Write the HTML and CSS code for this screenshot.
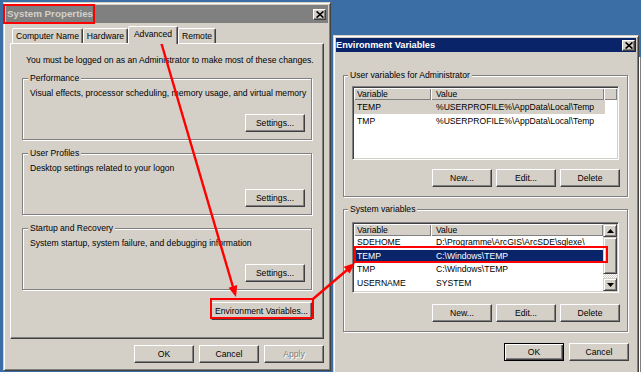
FILE: index.html
```html
<!DOCTYPE html>
<html>
<head>
<meta charset="utf-8">
<title>System Properties</title>
<link rel="stylesheet" href="styles.css">
</head>
<body>
<div class="desktop">
  <div class="win win-back"></div>

  <div class="win win-sys">
    <div class="titlebar titlebar-inactive">
      <span class="title-text">System Properties</span>
      <span class="close"><svg width="8" height="7" viewBox="0 0 8 7"><path d="M0.6 0.4 L7.4 6.6 M7.4 0.4 L0.6 6.6" stroke="#000" stroke-width="1.6"/></svg></span>
    </div>
    <div class="tabs">
      <div class="tab tab-cn">Computer Name</div>
      <div class="tab tab-hw">Hardware</div>
      <div class="tab tab-adv tab-active">Advanced</div>
      <div class="tab tab-rem">Remote</div>
    </div>
    <div class="panel">
      <p class="note">You must be logged on as an Administrator to make most of these changes.</p>
      <fieldset class="group sys-group group-perf">
        <legend>Performance</legend>
        <p class="desc">Visual effects, processor scheduling, memory usage, and virtual memory</p>
        <button class="btn btn-settings">Settings...</button>
      </fieldset>
      <fieldset class="group sys-group group-next">
        <legend>User Profiles</legend>
        <p class="desc">Desktop settings related to your logon</p>
        <button class="btn btn-settings">Settings...</button>
      </fieldset>
      <fieldset class="group sys-group group-next">
        <legend>Startup and Recovery</legend>
        <p class="desc">System startup, system failure, and debugging information</p>
        <button class="btn btn-settings">Settings...</button>
      </fieldset>
      <button class="btn btn-env">Environment Variables...</button>
    </div>
    <div class="dlg-buttons sys-buttons">
      <button class="btn">OK</button>
      <button class="btn">Cancel</button>
      <button class="btn btn-disabled">Apply</button>
    </div>
  </div>

  <div class="win win-env">
    <div class="titlebar titlebar-active">
      <span class="title-text title-env">Environment Variables</span>
      <span class="close close-env"><svg width="8" height="7" viewBox="0 0 8 7"><path d="M0.6 0.4 L7.4 6.6 M7.4 0.4 L0.6 6.6" stroke="#000" stroke-width="1.6"/></svg></span>
    </div>
    <fieldset class="group env-group group-user">
      <legend>User variables for Administrator</legend>
      <div class="listview lv-user">
        <div class="lv-main">
          <div class="lv-head"><span class="hcol c1">Variable</span><span class="hcol c2">Value</span><span class="hcol c3"></span></div>
          <div class="lv-row row-user row-dim"><span class="c1">TEMP</span><span class="c2">%USERPROFILE%\AppData\Local\Temp</span></div>
          <div class="lv-row row-user"><span class="c1">TMP</span><span class="c2">%USERPROFILE%\AppData\Local\Temp</span></div>
        </div>
      </div>
      <div class="group-buttons">
        <button class="btn">New...</button>
        <button class="btn">Edit...</button>
        <button class="btn">Delete</button>
      </div>
    </fieldset>
    <fieldset class="group env-group group-system">
      <legend>System variables</legend>
      <div class="listview lv-sys">
        <div class="lv-main">
          <div class="lv-head"><span class="hcol c1">Variable</span><span class="hcol c2 c2-fill">Value</span></div>
          <div class="lv-row row-sys"><span class="c1">SDEHOME</span><span class="c2">D:\Programme\ArcGIS\ArcSDE\sqlexe\</span></div>
          <div class="lv-row row-sys row-sel"><span class="c1">TEMP</span><span class="c2">C:\Windows\TEMP</span></div>
          <div class="lv-row row-sys"><span class="c1">TMP</span><span class="c2">C:\Windows\TEMP</span></div>
          <div class="lv-row row-sys"><span class="c1">USERNAME</span><span class="c2">SYSTEM</span></div>
        </div>
        <div class="scrollbar">
          <span class="sb-btn"><svg width="7" height="4" viewBox="0 0 7 4"><polygon points="3.5,0 7,4 0,4" fill="#000"/></svg></span>
          <span class="sb-thumb"></span>
          <span class="sb-track"></span>
          <span class="sb-btn"><svg width="7" height="4" viewBox="0 0 7 4"><polygon points="0,0 7,0 3.5,4" fill="#000"/></svg></span>
        </div>
      </div>
      <div class="group-buttons group-buttons-sys">
        <button class="btn">New...</button>
        <button class="btn">Edit...</button>
        <button class="btn">Delete</button>
      </div>
    </fieldset>
    <div class="dlg-buttons env-buttons">
      <button class="btn btn-default">OK</button>
      <button class="btn">Cancel</button>
    </div>
  </div>

  <div class="mark mark-title"></div>
  <div class="mark mark-envbtn"></div>
  <div class="mark mark-temp"></div>

  <svg class="arrows" width="641" height="372" viewBox="0 0 641 372">
    <line x1="161" y1="42" x2="233" y2="287" stroke="#f00" stroke-width="2.4"/>
    <polygon points="236,297 237.2,285.1 228.6,287.7" fill="#f00"/>
    <line x1="313" y1="299" x2="347" y2="270" stroke="#f00" stroke-width="2.4"/>
    <polygon points="355,263 349.5,273.5 343.7,266.7" fill="#f00"/>
  </svg>
</div>
</body>
</html>
```

FILE: styles.css
```css
* { box-sizing: border-box; }
html, body { margin: 0; padding: 0; }
body {
  width: 641px;
  height: 372px;
  overflow: hidden;
  background: #3a6ea5;
  font-family: "Liberation Sans", Arial, sans-serif;
  font-size: 8.6px;
  color: #000;
}
p { margin: 0; }
.desktop { position: relative; width: 641px; height: 372px; overflow: hidden; }

/* windows */
.win {
  position: absolute;
  background: #d4d0c8;
  border: 1px solid;
  border-color: #d4d0c8 #404040 #404040 #d4d0c8;
  box-shadow: inset 1px 1px 0 #fff, inset -1px -1px 0 #808080;
  padding: 2px;
  display: flex;
  flex-direction: column;
}
.win-sys { left: 3px; top: 2px; width: 328px; height: 369px; }
.win-env { left: 333px; top: 35px; width: 306px; height: 350px; }
.win-back {
  left: 638px; top: 57px; width: 12px; height: 330px;
  border: none; box-shadow: none; padding: 0;
  background: linear-gradient(to right, #d4d0c8 0 1px, #fff 1px 2px, #808080 2px 3px, #d4d0c8 3px);
}

.titlebar { display: flex; align-items: center; justify-content: space-between; flex: none; }
.titlebar-inactive { background: #808080; color: #d4d0c8; height: 18px; }
.titlebar-active { background: #0a246a; color: #fff; height: 14px; }
.title-text { font-weight: bold; font-size: 9.8px; line-height: 12px; padding-left: 1px; white-space: nowrap; }
.title-env { font-size: 9.2px; padding-left: 0; }
.close {
  width: 13px; height: 11px; margin-right: 2px;
  background: #d4d0c8;
  border: 1px solid; border-color: #fff #404040 #404040 #fff;
  box-shadow: inset -1px -1px 0 #808080;
  display: flex; align-items: center; justify-content: center;
}
.close svg { display: block; }
.close-env { margin-right: 1px; }

/* tabs */
.tabs {
  display: flex; align-items: flex-end;
  height: 17px; margin-top: 3px; padding-left: 6px;
  position: relative; z-index: 1; flex: none;
}
.tab {
  height: 15px;
  background: #d4d0c8;
  border: 1px solid; border-bottom: none;
  border-color: #fff #404040 transparent #fff;
  box-shadow: inset -1px 0 0 #808080;
  border-radius: 2px 2px 0 0;
  display: flex; align-items: center; justify-content: center;
  line-height: 11px; white-space: nowrap;
}
.tab-cn { width: 71px; }
.tab-hw { width: 45px; }
.tab-adv { width: 50px; }
.tab-rem { width: 38px; }
.tab-active { height: 18px; margin-bottom: -1px; padding-bottom: 2px; }

.panel {
  margin: 0 4px; height: 296px; flex: none;
  border: 1px solid; border-color: #fff #404040 #404040 #fff;
  box-shadow: inset -1px -1px 0 #808080;
  padding: 10px 11px 0;
  display: flex; flex-direction: column;
}
.note { line-height: 12px; padding-left: 4px; white-space: nowrap; }

/* group boxes */
fieldset { margin: 0; min-width: 0; }
.group {
  border: 1px solid #808080;
  box-shadow: inset 1px 1px 0 #fff, 1px 1px 0 #fff;
  display: flex; flex-direction: column;
}
.group legend { padding: 0 2px; line-height: 12px; background: #d4d0c8; white-space: nowrap; }
.sys-group { padding: 3px 6px 7px 7px; }
.sys-group legend { margin-left: -2px; }
.group-perf { margin-top: 6px; }
.group-next { margin-top: 7px; }
.desc { line-height: 12px; white-space: nowrap; }

/* buttons */
.btn {
  width: 60px; height: 18px; padding: 0;
  font: inherit; color: #000; line-height: 14px;
  background: #d4d0c8;
  border: 1px solid; border-color: #fff #404040 #404040 #fff;
  box-shadow: inset -1px -1px 0 #808080;
  white-space: nowrap;
  flex: none;
}
.btn-settings { align-self: flex-end; margin-top: 15px; }
.btn-env { align-self: flex-end; width: 101px; margin-top: 12px; }
.btn-disabled { color: #808080; text-shadow: 1px 1px 0 #fff; }
.btn-default {
  border-color: #000;
  box-shadow: inset 1px 1px 0 #fff, inset -1px -1px 0 #404040, inset -2px -2px 0 #808080;
}
.dlg-buttons { display: flex; justify-content: flex-end; gap: 5px; flex: none; }
.sys-buttons { margin-top: 6px; padding-right: 4px; }
.env-buttons { margin-top: 11px; padding-right: 7px; }

/* env dialog groups */
.env-group { margin-left: 7px; margin-right: 8px; padding: 5px 8px 9px 8px; }
.env-group legend { margin-left: -4px; }
.group-user { margin-top: 17px; }
.group-system { margin-top: 6px; padding-top: 7px; }
.group-buttons { display: flex; justify-content: flex-end; gap: 4px; margin-top: 9px; margin-right: -1px; }
.group-buttons-sys { margin-top: 11px; }

/* list views */
.listview {
  background: #fff;
  border: 1px solid; border-color: #808080 #fff #fff #808080;
  box-shadow: inset 1px 1px 0 #404040, inset -1px -1px 0 #d4d0c8;
  padding: 1px;
  overflow: hidden;
  display: flex;
}
.lv-user { height: 74px; }
.lv-sys { height: 71px; }
.lv-main { flex: 1; min-width: 0; overflow: hidden; }
.lv-head { display: flex; height: 12px; }
.hcol {
  background: #d4d0c8;
  box-shadow: inset 1px 1px 0 #fff, inset -1px -1px 0 #808080;
  line-height: 12px; white-space: nowrap;
}
.c1 { width: 77px; padding-left: 3px; flex: none; white-space: nowrap; }
.c2 { width: 173px; padding-left: 5px; flex: none; white-space: nowrap; }
.hcol.c3, .c2-fill { flex: 1; }
.lv-row { display: flex; width: 251px; }
.lv-row .c2 { flex: 1; }
.row-user { height: 14px; line-height: 14px; }
.row-sys { height: 13.5px; line-height: 13.5px; }
.row-dim { background: #d4d0c8; }
.row-sel { background: #0a246a; color: #fff; }

.scrollbar { width: 14px; flex: none; display: flex; flex-direction: column; }
.sb-btn, .sb-thumb {
  background: #d4d0c8;
  border: 1px solid; border-color: #d4d0c8 #404040 #404040 #d4d0c8;
  box-shadow: inset 1px 1px 0 #fff, inset -1px -1px 0 #808080;
}
.sb-btn { height: 13px; display: flex; align-items: center; justify-content: center; flex: none; }
.sb-btn svg { display: block; }
.sb-thumb { height: 37px; flex: none; }
.sb-track { flex: 1; background: repeating-conic-gradient(#fff 0 25%, #d4d0c8 0 50%) 0 0 / 2px 2px; }

/* annotations */
.mark { position: absolute; border: 2px solid #f00; }
.mark-title { left: 3px; top: 4px; width: 92px; height: 20px; }
.mark-envbtn { left: 210px; top: 298px; width: 104px; height: 21px; }
.mark-temp { left: 354px; top: 246px; width: 254px; height: 17px; }
.arrows { position: absolute; left: 0; top: 0; pointer-events: none; }
```
